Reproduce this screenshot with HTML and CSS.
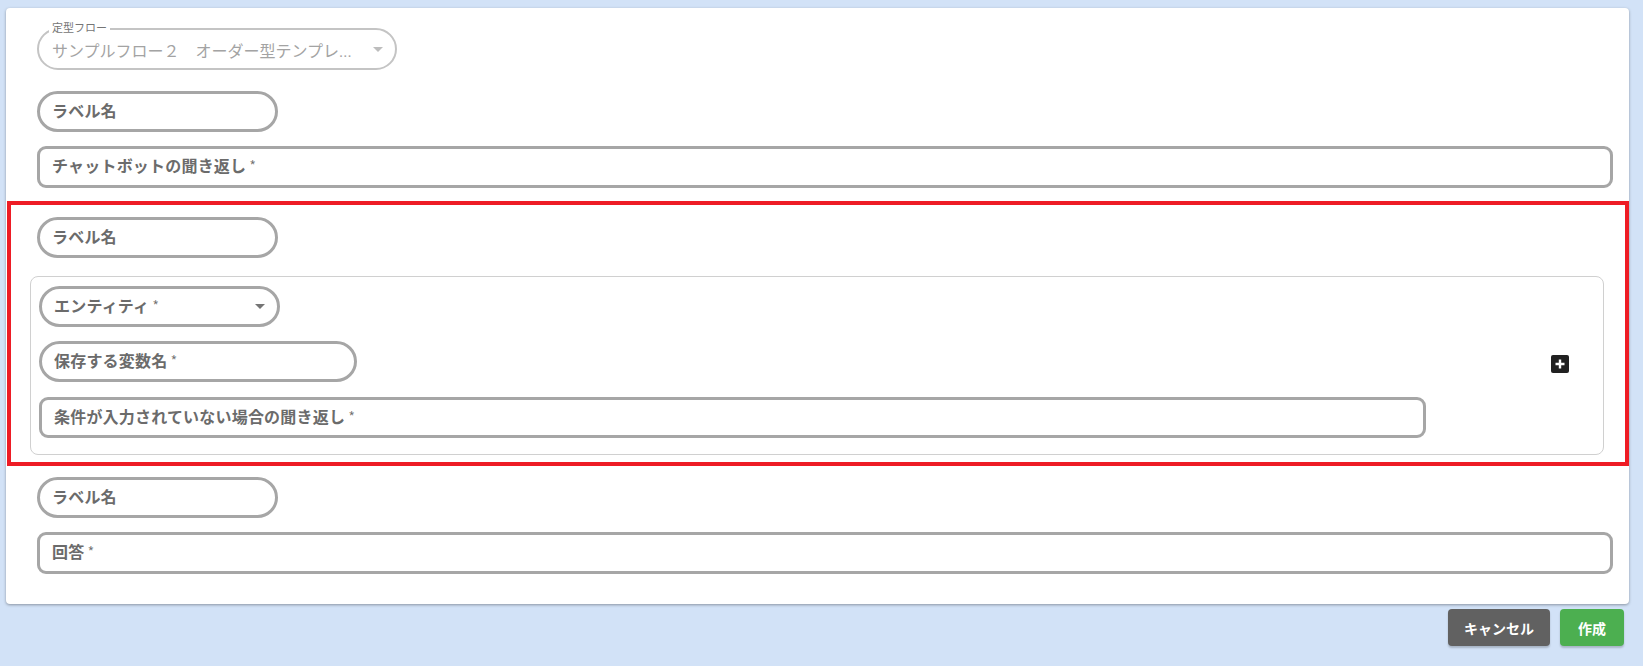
FILE: index.html
```html
<!DOCTYPE html>
<html lang="ja">
<head>
    <meta charset="UTF-8">
    <title>定型フロー</title>
    <link rel="stylesheet" href="styles.css">
</head>
<body>

    <div class="card">
        <!-- Template flow select -->
        <div class="row first">
            <div class="select-outline">
                <span class="float-label">定型フロー</span>
                <span class="select-value">サンプルフロー２　オーダー型テンプレ...</span>
                <span class="arrow light"></span>
            </div>
        </div>

        <div class="row">
            <div class="field pill short"><span class="field-text">ラベル名</span></div>
        </div>
        <div class="row">
            <div class="field box wide"><span class="field-text">チャットボットの聞き返し<span class="req">*</span></span></div>
        </div>

        <!-- Highlighted block -->
        <div class="highlight">
            <div class="field pill short inset"><span class="field-text">ラベル名</span></div>

            <div class="condition-box">
                <div class="condition-fields">
                    <div class="field pill short spread">
                        <span class="field-text">エンティティ<span class="req">*</span></span>
                        <span class="arrow"></span>
                    </div>
                    <div class="field pill medium"><span class="field-text">保存する変数名<span class="req">*</span></span></div>
                    <div class="field box long"><span class="field-text">条件が入力されていない場合の聞き返し<span class="req">*</span></span></div>
                </div>
                <div class="add-col">
                    <svg class="add-icon" width="18" height="18" viewBox="0 0 18 18">
                        <rect x="0" y="0" width="18" height="18" rx="2" fill="#212121"/>
                        <path d="M9 4.5v9M4.5 9h9" stroke="#fff" stroke-width="2.4"/>
                    </svg>
                </div>
            </div>
        </div>

        <div class="row after">
            <div class="field pill short"><span class="field-text">ラベル名</span></div>
        </div>
        <div class="row">
            <div class="field box wide answer"><span class="field-text">回答<span class="req">*</span></span></div>
        </div>
    </div>

    <div class="actions">
        <button class="btn cancel">キャンセル</button>
        <button class="btn create">作成</button>
    </div>

</body>
</html>
```

FILE: styles.css
```css
/* Basic reset */
* {
    margin: 0;
    padding: 0;
    box-sizing: border-box;
}

body {
    font-family: Roboto, "Noto Sans CJK JP", sans-serif;
    background: #d2e2f7;
    height: 100vh;
    padding: 8px 14px 0 6px;
    overflow: hidden;
}

/* Main white card */
.card {
    background: #fff;
    border-radius: 4px;
    box-shadow: 0 1px 3px rgba(0, 0, 0, 0.35);
    padding: 20px 0 30px 0;
    display: flex;
    flex-direction: column;
}

.row {
    padding: 0 16px 0 31px;
    margin-top: 14px;
}

.row.first {
    margin-top: 0;
    margin-bottom: 7px;
}

.row.after {
    margin-top: 11px;
}

/* Outlined select with floating label */
.select-outline {
    position: relative;
    width: 360px;
    height: 42px;
    border: 2px solid #c4c4c4;
    border-radius: 21px;
    display: flex;
    align-items: center;
    justify-content: space-between;
    padding: 0 12px 0 13px;
}

.float-label {
    position: absolute;
    top: -8px;
    left: 10px;
    font-size: 11px;
    line-height: 13px;
    color: #757575;
    background: #fff;
    padding: 0 3px;
}

.select-value {
    font-size: 16px;
    color: #a3a3a3;
    padding-top: 2px;
}

.arrow {
    width: 0;
    height: 0;
    border-left: 5px solid transparent;
    border-right: 5px solid transparent;
    border-top: 5px solid #757575;
}

.arrow.light {
    border-top-color: #bdbdbd;
}

/* Text fields */
.field {
    height: 41px;
    border: 3px solid #a6a6a6;
    display: flex;
    align-items: center;
    padding-left: 12px;
}

.field.pill {
    border-radius: 21px;
}

.field.box {
    border-radius: 9px;
}

.field.short {
    width: 241px;
}

.field.medium {
    width: 318px;
}

.field.long {
    width: 1387px;
}

.field.wide {
    width: 100%;
    height: 42px;
}

.field.spread {
    justify-content: space-between;
    padding-right: 12px;
}

.field-text {
    font-size: 16px;
    font-weight: bold;
    color: #6b6b6b;
    line-height: 1;
    letter-spacing: 0.2px;
}

.req {
    font-size: 11px;
    font-weight: normal;
    margin-left: 4px;
    vertical-align: 4px;
}

/* Red highlight block */
.highlight {
    margin: 13px 0 0 1px;
    border: 4px solid #ee1c25;
    padding: 12px 21px 7px 19px;
}

.field.inset {
    margin-left: 7px;
}

.condition-box {
    margin-top: 18px;
    border: 1px solid #d0d0d0;
    border-radius: 8px;
    padding: 9px 0 16px 8px;
    display: flex;
    align-items: center;
}

.condition-fields {
    display: flex;
    flex-direction: column;
    gap: 14px;
}

.condition-fields .long {
    margin-top: 1px;
}

.add-col {
    flex: 1;
    display: flex;
    justify-content: flex-end;
    padding-right: 34px;
    padding-top: 3px;
}

.add-icon {
    display: block;
}

/* Bottom buttons */
.actions {
    display: flex;
    justify-content: flex-end;
    gap: 10px;
    margin-top: 5px;
    padding-right: 5px;
}

.btn {
    height: 37px;
    min-width: 64px;
    padding: 0 16px;
    border: none;
    border-radius: 4px;
    color: #fff;
    font-family: "Noto Sans CJK JP", sans-serif;
    font-size: 14px;
    font-weight: bold;
    box-shadow: 0 2px 2px rgba(0, 0, 0, 0.2);
    cursor: pointer;
}

.btn.cancel {
    background: #616161;
}

.btn.create {
    background: #4caf50;
}
```
